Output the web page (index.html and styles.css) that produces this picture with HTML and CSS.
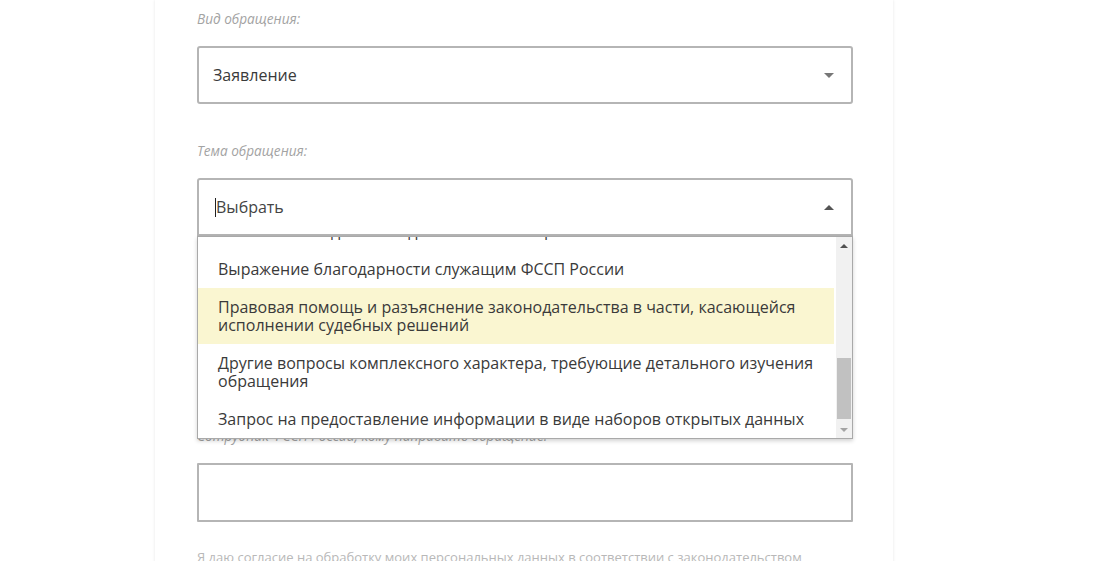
FILE: index.html
```html
<!DOCTYPE html>
<html lang="ru">
<head>
<meta charset="utf-8">
<title>Обращение</title>
<link rel="stylesheet" href="styles.css">
</head>
<body>
<main class="card">
  <div class="group">
    <div class="label">Вид обращения:</div>
    <div class="select">
      <span class="value">Заявление</span>
      <span class="arrow down"></span>
    </div>
  </div>

  <div class="group">
    <div class="label">Тема обращения:</div>
    <div class="combo">
      <div class="select open">
        <span class="value placeholder"><span class="caret"></span>Выбрать</span>
        <span class="arrow up"></span>
      </div>
      <div class="dropdown">
        <div class="viewport">
          <ul class="options">
            <li class="option">Обжалование действий должностных лиц ФССП России</li>
            <li class="option">Выражение благодарности служащим ФССП России</li>
            <li class="option active">Правовая помощь и разъяснение законодательства в части, касающейся исполнении судебных решений</li>
            <li class="option">Другие вопросы комплексного характера, требующие детального изучения обращения</li>
            <li class="option">Запрос на предоставление информации в виде наборов открытых данных</li>
          </ul>
        </div>
        <div class="scrollbar">
          <span class="sb-btn"><span class="sb-arrow sb-up"></span></span>
          <span class="sb-track"><span class="sb-thumb"></span></span>
          <span class="sb-btn"><span class="sb-arrow sb-down"></span></span>
        </div>
      </div>
    </div>
  </div>

  <div class="group group-far">
    <div class="label">Сотрудник ФССП России, кому направить обращение:</div>
    <div class="input"></div>
  </div>

  <div class="group group-last">
    <div class="note">Я даю согласие на обработку моих персональных данных в соответствии с законодательством</div>
  </div>
</main>
</body>
</html>
```

FILE: styles.css
```css
* { box-sizing: border-box; }
html, body { margin: 0; padding: 0; background: #fff; }
body {
  font-family: "Open Sans", "Noto Sans", sans-serif;
  color: #333;
  overflow: hidden;
  height: 561px;
}
.card {
  margin-left: 155px;
  width: 738px;
  min-height: 561px;
  padding: 10px 40px 0 42px;
  background: #fff;
  box-shadow: 0 0 3px rgba(0, 0, 0, 0.10);
}
.group + .group { margin-top: 38px; }
.group.group-far { margin-top: 191px; }
.group.group-last { margin-top: 26px; }
.label {
  font-size: 13.6px;
  font-style: italic;
  line-height: 18px;
  color: #a3a3a3;
  margin-bottom: 18px;
}
.select {
  height: 58px;
  border: 2px solid #b5b5b5;
  border-radius: 3px;
  display: flex;
  align-items: center;
  justify-content: space-between;
  padding: 0 16px 0 14px;
  background: #fff;
}
.select.open { border-radius: 3px 3px 0 0; }
.value { font-size: 16px; color: #3a3a3a; line-height: 20px; }
.placeholder { display: flex; align-items: center; color: #444; padding-left: 2px; }
.caret {
  display: inline-block;
  width: 1px;
  height: 19px;
  background: #222;
  margin-right: 0;
}
.arrow {
  width: 0;
  height: 0;
  border-left: 5px solid transparent;
  border-right: 5px solid transparent;
  margin-right: 1px;
}
.arrow.down { border-top: 5px solid #777; }
.arrow.up { border-bottom: 5px solid #555; }
.combo { position: relative; }
.dropdown {
  position: absolute;
  left: 0;
  right: 0;
  top: 58px;
  height: 203px;
  background: #fff;
  border: 1px solid #a9a9a9;
  box-shadow: 0 2px 4px rgba(0, 0, 0, 0.18);
  display: flex;
  z-index: 5;
}
.viewport { flex: 1; overflow: hidden; padding-right: 2px; }
.options { list-style: none; margin: -25px 0 0; padding: 0; }
.option {
  padding: 10px 20px;
  font-size: 16px;
  line-height: 18px;
  color: #3a3a3a;
}
.option.active { background: #faf6d1; }
.scrollbar {
  width: 16px;
  background: #f1f1f1;
  display: flex;
  flex-direction: column;
}
.sb-btn {
  height: 17px;
  display: flex;
  align-items: center;
  justify-content: center;
}
.sb-arrow { width: 0; height: 0; border-left: 4px solid transparent; border-right: 4px solid transparent; }
.sb-up { border-bottom: 4px solid #505050; }
.sb-down { border-top: 4px solid #a3a3a3; }
.sb-track { flex: 1; display: flex; flex-direction: column; justify-content: flex-end; padding: 0 1px 2px; }
.sb-thumb { height: 61px; background: #c1c1c1; }
.input {
  height: 59px;
  border: 2px solid #b5b5b5;
  border-radius: 1px;
  background: #fff;
}
.note {
  font-size: 13px;
  line-height: 18px;
  color: #b8b8b8;
}
```
